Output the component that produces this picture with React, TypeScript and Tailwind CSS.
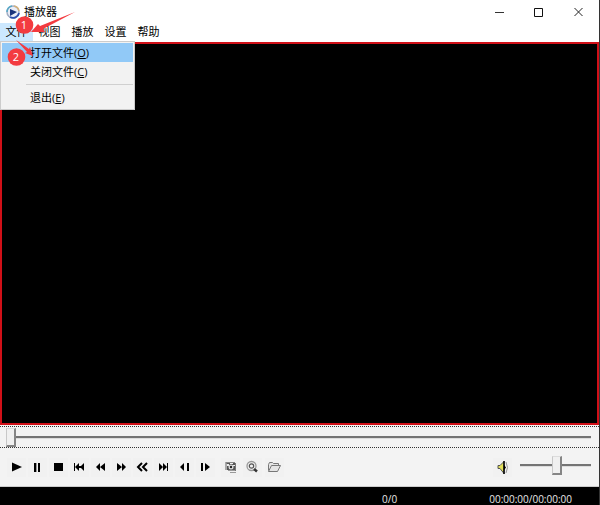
import React, { useState } from "react";

const menus = ["文件", "视图", "播放", "设置", "帮助"];

const range =
  "block appearance-none bg-transparent outline-none [&::-webkit-slider-runnable-track]:h-[3px] [&::-webkit-slider-runnable-track]:border-t-2 [&::-webkit-slider-runnable-track]:border-b [&::-webkit-slider-runnable-track]:border-t-[#747474] [&::-webkit-slider-runnable-track]:border-b-[#dcdcdc] [&::-webkit-slider-thumb]:appearance-none [&::-webkit-slider-thumb]:w-[10px] [&::-webkit-slider-thumb]:h-[19px] [&::-webkit-slider-thumb]:-mt-[10px] [&::-webkit-slider-thumb]:bg-[#f0f0f0] [&::-webkit-slider-thumb]:border-r-2 [&::-webkit-slider-thumb]:border-b-2 [&::-webkit-slider-thumb]:border-l [&::-webkit-slider-thumb]:border-t [&::-webkit-slider-thumb]:border-t-[#dcdcdc] [&::-webkit-slider-thumb]:border-l-[#c8c8c8] [&::-webkit-slider-thumb]:border-r-[#858585] [&::-webkit-slider-thumb]:border-b-[#858585]";

const transport: [string, React.ReactNode][] = [
  ["播放", <path d="M5 4.500 L15 9 L5 13.500 Z" />],
  [
    "暂停",
    <g>
      <path d="M6 5h2v9H6z M10 5h2v9h-2z" />
      <path d="M8 5h1v9H8z" fill="#999" />
    </g>,
  ],
  ["停止", <path d="M5 5h9v8H5z" />],
  ["第一个", <path d="M4 5h1v8H4z M9 5v8L5 9z M14 5v8L10 9z M9 8h2v2H9z" />],
  ["快退", <path d="M9 5v8L5 9z M14 5v8L9 9z" />],
  ["快进", <path d="M5 5v8L10 9z M10 5v8L14 9z" />],
  ["上一个", <path d="M9 5 L5 9 L9 13 M14 5 L10 9 L14 13" fill="none" stroke="#000" strokeWidth="2" />],
  ["最后一个", <path d="M5 5v8l4-4z M9 5v8l4-4z M13 5h1v8h-1z" />],
  ["上一帧", <path d="M9 5v8L5 9z M12 5h2v8h-2z" />],
  ["下一帧", <path d="M5 5h2v8H5z M9 5v8l5-4z" />],
];

const tools: [string, React.ReactNode][] = [
  [
    "截图",
    <g>
      <path d="M4 4h2v8H4z" fill="#aaa" />
      <path d="M5 4h9v2H5z" fill="#888" />
      <path d="M6 5h8v7H6z" fill="#555" />
      <path d="M6 6h2v2H6z M9 5h3v1H9z M12 7h2v1h-2z" fill="#eee" />
      <circle cx="10" cy="9" r="2.500" fill="#ddd" />
      <circle cx="10" cy="9" r="1.200" fill="#222" />
      <path d="M7 12.500h8M9 14.500h6" stroke="#999" />
      <path d="M14.500 5v8" stroke="#777" />
    </g>,
  ],
  [
    "缩放",
    <g fill="none">
      <circle cx="8.500" cy="8" r="4.500" stroke="#999" strokeWidth="1.300" />
      <circle cx="8.500" cy="8" r="2.200" stroke="#555" strokeWidth="1.200" />
      <path d="M11 11 L14 13.500" stroke="#333" strokeWidth="2.500" />
    </g>,
  ],
  [
    "打开",
    <path d="M3.500 12.500v-6l1-2h3l1 1h5v2 M3.500 13.500l3-6h9l-3 6z" fill="#e4e4e4" stroke="#777" />,
  ],
];

function ToolButton({ label, children }: { label: string; children: React.ReactNode }) {
  return (
    <button type="button" aria-label={label} className="h-[19px] w-[19px] bg-[#f1f1f1]">
      <svg viewBox="0 0 19 19" className="block h-[19px] w-[19px]">{children}</svg>
    </button>
  );
}

function MenuItem({ text, hotkey, active }: { text: string; hotkey: string; active?: boolean }) {
  return (
    <button
      type="button"
      role="menuitem"
      className={`flex h-[19px] w-full items-center pl-[28px] ${active ? "bg-[#91c9f7]" : ""}`}
    >
      {text}(<span className="underline">{hotkey}</span>)
    </button>
  );
}

export default function App() {
  const [position, setPosition] = useState(0);
  const [volume, setVolume] = useState(53);
  return (
    <div className="relative flex h-screen flex-col border-r border-[#333] bg-[#f3f3f3] font-['Open_Sans','Noto_Sans_CJK_SC',sans-serif] text-[11px] leading-[16px] text-black">
      <header className="flex h-[23px] items-center bg-white pl-[6px]">
        <svg viewBox="0 0 14 14" className="mr-[4px] h-[14px] w-[14px]">
          <circle cx="7" cy="7" r="6" fill="#e9edf7" stroke="#a3aec4" strokeWidth="1.500" />
          <path d="M1 7a6 6 0 0 1 5-6" fill="none" stroke="#55a9c8" strokeWidth="1.500" />
          <path d="M8 1a6 6 0 0 1 5 5" fill="none" stroke="#d5b079" strokeWidth="1.500" />
          <path d="M13 8a6 6 0 0 1-9 4" fill="none" stroke="#2d4fae" strokeWidth="1.800" />
          <path d="M4 4l7 3-7 4z" fill="#1b347c" />
        </svg>
        <h1 className="flex-1">播放器</h1>
        <button type="button" aria-label="最小化" className="flex h-[21px] w-[39px] items-center justify-center">
          <svg viewBox="0 0 10 10" className="h-[10px] w-[10px]"><path d="M0 5.500h9" stroke="#333" /></svg>
        </button>
        <button type="button" aria-label="最大化" className="flex h-[21px] w-[40px] items-center justify-center">
          <svg viewBox="0 0 10 10" className="h-[10px] w-[10px]"><path d="M.5 1.500h8v8h-8z" fill="none" stroke="#111" /></svg>
        </button>
        <button type="button" aria-label="关闭" className="flex h-[21px] w-[40px] items-center justify-center">
          <svg viewBox="0 0 10 10" className="h-[10px] w-[10px]"><path d="M.5 1l8 8M8.500 1l-8 8" stroke="#222" /></svg>
        </button>
      </header>

      <nav className="relative flex h-[19px] bg-white">
        {menus.map((m, i) => (
          <button
            key={m}
            type="button"
            className={`h-[18px] w-[33px] leading-[18px] ${i === 0 ? "bg-[#cce8ff]" : ""}`}
          >
            {m}
          </button>
        ))}
        <div
          role="menu"
          className="absolute top-[18px] left-0 z-10 h-[69px] w-[135px] border border-[#ccc] bg-[#f2f2f2] p-px"
        >
          <MenuItem text="打开文件" hotkey="O" active />
          <MenuItem text="关闭文件" hotkey="C" />
          <hr className="my-[3px] ml-[24px] border-[#d0d0d0]" />
          <MenuItem text="退出" hotkey="E" />
        </div>
      </nav>

      <main className="flex-1 border-2 border-[#d01018] bg-black" />

      <div className="mt-px border-y border-dotted border-[#333] pr-[8px] pl-[6px]">
        <input
          type="range"
          aria-label="播放进度"
          min={0}
          max={100}
          value={position}
          onChange={(e) => setPosition(Number(e.target.value))}
          className={`${range} h-[20px] w-full`}
        />
      </div>

      <div className="flex h-[39px] items-center border-b border-[#ccc] pr-[8px] pl-[7px]">
        <div className="flex gap-[2px]">
          {transport.map(([label, icon]) => (
            <ToolButton key={label} label={label}>{icon}</ToolButton>
          ))}
        </div>
        <div className="ml-[6px] flex gap-[3px]">
          {tools.map(([label, icon]) => (
            <ToolButton key={label} label={label}>{icon}</ToolButton>
          ))}
        </div>
        <div className="ml-auto flex items-center gap-[8px]">
          <ToolButton label="静音">
            <path d="M5 7.500h2l4-4v12l-4-5H5z" fill="#e3e05a" stroke="#555" />
            <path d="M11 3v13" stroke="#000" strokeWidth="1.500" />
            <path d="M11 7l2 2.500-2 2.500z" fill="#000" />
            <path d="M13 4q3 5.500 0 11" fill="none" stroke="#999" />
          </ToolButton>
          <input
            type="range"
            aria-label="音量"
            min={0}
            max={100}
            value={volume}
            onChange={(e) => setVolume(Number(e.target.value))}
            className={`${range} mb-[4px] h-[20px] w-[71px]`}
          />
        </div>
      </div>

      <footer className="flex h-[18px] items-end justify-end gap-[92px] bg-black pr-[27px] text-[10px] leading-[12px] text-[#e8e8e8]">
        <span>0/0</span>
        <span>00:00:00/00:00:00</span>
      </footer>

      <svg viewBox="0 0 80 70" className="pointer-events-none absolute top-0 left-0 z-20 h-[70px] w-[80px]">
        <path d="M75 12 L43 29 L45 32 L31 32 L38 24 L40 26 Z" fill="#f33b40" />
        <path d="M16 40 L29 49 L30 47 L33 56 L25 53 L27 52 Z" fill="#f33b40" />
        <circle cx="24.500" cy="25" r="8.800" fill="#f33b40" />
        <circle cx="16.500" cy="57" r="8.800" fill="#f33b40" />
        <text x="24" y="29" textAnchor="middle" fontSize="11" fill="#fff">1</text>
        <text x="16" y="61" textAnchor="middle" fontSize="11" fill="#fff">2</text>
      </svg>
    </div>
  );
}
